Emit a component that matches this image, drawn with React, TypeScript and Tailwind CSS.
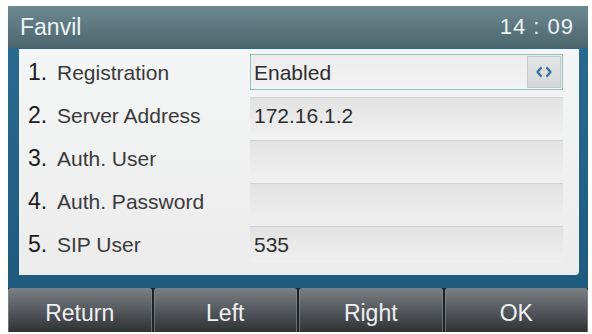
const ROWS = [
  { n: "1.", label: "Registration", value: "Enabled", selected: true },
  { n: "2.", label: "Server Address", value: "172.16.1.2" },
  { n: "3.", label: "Auth. User", value: "" },
  { n: "4.", label: "Auth. Password", value: "" },
  { n: "5.", label: "SIP User", value: "535" },
];

const KEYS = ["Return", "Left", "Right", "OK"];

function SwitchArrows() {
  return (
    <div className="flex h-full w-[34px] items-center justify-center border border-[#c4c8c8] bg-gradient-to-b from-[#e4e6e6] to-[#d4d7d7]">
      <svg width="18" height="12" viewBox="0 0 18 12" fill="none">
        <path d="M6 2 2.5 6 6 10" stroke="#2f6ea6" strokeWidth="2.2" strokeLinecap="round" strokeLinejoin="round" />
        <path d="M12 2l3.5 4-3.5 4" stroke="#2f6ea6" strokeWidth="2.2" strokeLinecap="round" strokeLinejoin="round" />
      </svg>
    </div>
  );
}

export default function App() {
  return (
    <div className="h-[334px] w-[592px] bg-white pl-[8px] pt-[6px] font-['Liberation_Sans',Arial,sans-serif]">
      <div className="flex h-[326px] w-[580px] flex-col bg-gradient-to-b from-[#2a6d93] to-[#1b587c]">
        {/* Title bar */}
        <div className="flex h-[42px] items-center justify-between bg-gradient-to-b from-[#6d8990] to-[#4c666e] pl-[12px] pr-[14px] text-[#eef3f4]">
          <span className="text-[23px] leading-none">Fanvil</span>
          <span className="text-[22px] leading-none tracking-[1px]">14 : 09</span>
        </div>

        {/* Settings list */}
        <div className="mt-[1px] flex h-[226px] pl-[11px] pr-[9px]">
          <div className="flex flex-1 flex-col gap-[7px] rounded-br-[4px] bg-gradient-to-b from-[#f4f5f5] to-[#ececec] pb-[13px] pl-[9px] pr-[16px] pt-[5px]">
            {ROWS.map((row) => (
              <div key={row.n} className="flex h-[36px] items-center">
                <span className="w-[29px] text-[23px] leading-none text-[#1c1c1c]">{row.n}</span>
                <span className="w-[193px] text-[21px] leading-none text-[#3a3a3a]">{row.label}</span>
                <div
                  className={
                    row.selected
                      ? "flex h-full flex-1 items-center border border-[#8cc4bf] bg-gradient-to-b from-[#ececec] to-[#f3f3f3] pl-[3px] pr-[1px]"
                      : "flex h-full flex-1 items-center border-t border-[#d2d2d2] bg-gradient-to-b from-[#e2e2e2] to-[#efefef] pl-[4px]"
                  }
                >
                  <span className="flex-1 text-[21px] leading-none text-[#2e2e2e]">{row.value}</span>
                  {row.selected && (
                    <div className="h-[32px]">
                      <SwitchArrows />
                    </div>
                  )}
                </div>
              </div>
            ))}
          </div>
        </div>

        {/* Soft keys */}
        <div className="mt-[13px] grid h-[44px] grid-cols-4 gap-[2px] bg-[#1c2326]">
          {KEYS.map((k) => (
            <div
              key={k}
              className="flex items-center justify-center rounded-t-[3px] border-x border-[#8a9094]/60 bg-gradient-to-b from-[#7c8185] via-[#55595d] to-[#2f3336] pt-[6px] text-[23px] leading-none text-[#eef0f1]"
            >
              {k}
            </div>
          ))}
        </div>
      </div>
    </div>
  );
}
